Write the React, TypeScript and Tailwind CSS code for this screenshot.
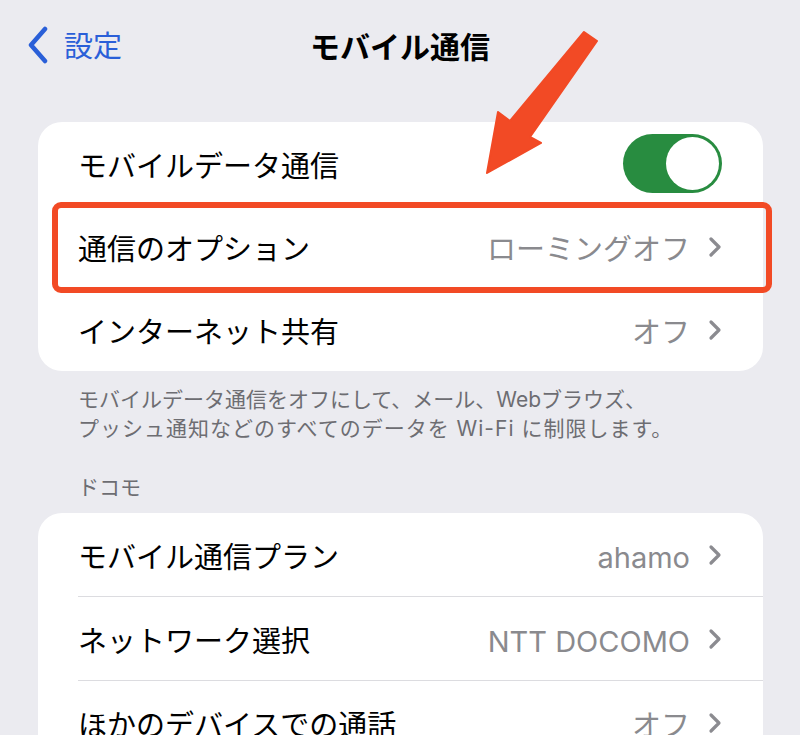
import { type ReactNode } from 'react'

const font = { fontFamily: '"Inter", "Noto Sans CJK JP", sans-serif' }

function Chevron() {
  return (
    <svg className="w-[14px] h-[22px] shrink-0" viewBox="0 0 14 22" fill="none" stroke="#8b8b90" strokeWidth="3.2" strokeLinecap="round" strokeLinejoin="round">
      <path d="M3 3l8 8-8 8" />
    </svg>
  )
}

function Row({ label, value, last, children, h = 'h-[84px]' }: { label: string; value?: string; last?: boolean; children?: ReactNode; h?: string }) {
  return (
    <div className={`relative flex items-center ${h} pl-[40px] pr-[41px]`}>
      <span className="pt-[6px] text-[29px] text-black flex-1">{label}</span>
      {value && <span className="pt-[6px] text-[29px] text-[#8a8a8e] mr-[18px]">{value}</span>}
      {value && <Chevron />}
      {children}
      {!last && <div className="absolute bottom-0 left-[40px] right-0 h-px bg-[#dcdce0]" />}
    </div>
  )
}

export default function App() {
  return (
    <div className="relative w-[800px] h-[735px] overflow-hidden bg-[#ebebf0]" style={font}>
      {/* Nav bar */}
      <header className="relative h-[90px] flex items-center justify-center">
        <div className="absolute left-[26px] top-0 h-full flex items-center gap-[14px] text-[#2a5fd8]">
          <svg className="w-[24px] h-[38px]" viewBox="0 0 24 38" fill="none" stroke="currentColor" strokeWidth="4.5" strokeLinecap="round" strokeLinejoin="round">
            <path d="M19 3L5 19l14 16" />
          </svg>
          <span className="pt-[4px] text-[29px]">設定</span>
        </div>
        <h1 className="pt-[4px] text-[30px] font-bold text-black">モバイル通信</h1>
      </header>

      <div className="pl-[38px] pr-[37px]">
        {/* Card 1 */}
        <div className="relative mt-[32px] bg-white rounded-[24px]">
          <Row label="モバイルデータ通信" h="h-[83px]">
            <div className="w-[99px] h-[59px] rounded-full bg-[#288c40] flex items-center justify-end pr-[3px]">
              <div className="w-[53px] h-[53px] rounded-full bg-white" />
            </div>
          </Row>
          <Row label="通信のオプション" value="ローミングオフ" h="h-[83px]" />
          <Row label="インターネット共有" value="オフ" h="h-[83px]" last />

          {/* highlight */}
          <div className="absolute left-[14px] top-[80px] w-[720px] h-[91px] border-[6px] border-[#f24a25] rounded-[9px]" />
        </div>

        <p className="pt-[14px] pl-[40px] text-[21px] leading-[29px] text-[#6d6d72]">
          <span>モバイルデータ通信をオフにして、メール、Webブラウズ、</span>
          <br />
          <span className="tracking-[1px]">プッシュ通知などのすべてのデータを Wi-Fi に制限します。</span>
        </p>

        <div className="mt-[30px] pl-[40px] text-[21px] leading-[29px] text-[#6d6d72]">ドコモ</div>

        {/* Card 2 */}
        <div className="mt-[11px] bg-white rounded-[24px]">
          <Row label="モバイル通信プラン" value="ahamo" />
          <Row label="ネットワーク選択" value="NTT DOCOMO" />
          <Row label="ほかのデバイスでの通話" value="オフ" last />
        </div>
      </div>

      {/* arrow annotation */}
      <svg className="absolute left-0 top-0 w-[800px] h-[735px] pointer-events-none" viewBox="0 0 800 735">
        <polygon
          points="584,32 597,41 530,137 541,143 487,173 498,112 510,121"
          fill="#f24a25"
          stroke="#f24a25"
          strokeWidth="2"
          strokeLinejoin="round"
        />
      </svg>
    </div>
  )
}
